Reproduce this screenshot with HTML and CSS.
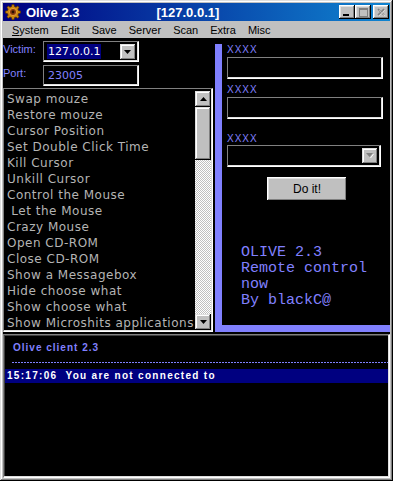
FILE: index.html
```html
<!DOCTYPE html>
<html lang="en">
<head>
  <meta charset="UTF-8">
  <title>Olive 2.3</title>
  <link rel="stylesheet" href="styles.css">
</head>
<body>

  <div class="window">
    <div class="titlebar">
      <svg class="app-icon" width="16" height="16" viewBox="0 0 16 16">
        <g fill="#d08a10" stroke="#5a3400" stroke-width="0.8">
          <path d="M7 0.5h2l0.4 2 1.6 0.7 1.7-1.2 1.4 1.4-1.2 1.7 0.7 1.6 2 0.4v2l-2 0.4-0.7 1.6 1.2 1.7-1.4 1.4-1.7-1.2-1.6 0.7-0.4 2h-2l-0.4-2-1.6-0.7-1.7 1.2-1.4-1.4 1.2-1.7-0.7-1.6-2-0.4v-2l2-0.4 0.7-1.6-1.2-1.7 1.4-1.4 1.7 1.2 1.6-0.7z"/>
        </g>
        <circle cx="8" cy="8" r="3.6" fill="#8a3a10" stroke="#f0b040" stroke-width="0.8"/>
        <circle cx="8" cy="8" r="1.4" fill="#2a1000"/>
      </svg>
      <span class="title">Olive 2.3</span>
      <span class="title-ip">[127.0.0.1]</span>
      <div class="title-buttons">
        <div class="tbtn"><svg width="8" height="7" viewBox="0 0 8 7"><rect x="0" y="5" width="6" height="2" fill="#000"/></svg></div>
        <div class="tbtn"><svg width="9" height="9" viewBox="0 0 9 9"><rect x="0.5" y="0.5" width="8" height="8" fill="none" stroke="#808080"/><rect x="0" y="0" width="9" height="2" fill="#808080"/></svg></div>
        <div class="tbtn close"><svg width="9" height="8" viewBox="0 0 9 8"><path d="M1 1l6 6M7 1l-6 6" stroke="#808080" stroke-width="1.6"/><path d="M2 2l6 6M8 2l-6 6" stroke="#fff" stroke-width="0.6" opacity="0.7"/></svg></div>
      </div>
    </div>

    <div class="menubar">
      <span class="menu-item"><u>S</u>ystem</span>
      <span class="menu-item">Edit</span>
      <span class="menu-item">Save</span>
      <span class="menu-item">Server</span>
      <span class="menu-item">Scan</span>
      <span class="menu-item">Extra</span>
      <span class="menu-item">Misc</span>
    </div>

    <div class="client">
      <div class="top">
        <div class="left">
          <div class="field-row">
            <label class="field-label">Victim:</label>
            <div class="combo">
              <span class="combo-value selected">127.0.0.1</span>
              <div class="drop-btn"><svg width="7" height="4" viewBox="0 0 7 4"><path d="M0 0h7l-3.5 4z" fill="#000"/></svg></div>
            </div>
          </div>
          <div class="field-row">
            <label class="field-label">Port:</label>
            <div class="textbox port">23005</div>
          </div>

          <div class="listbox">
            <ul class="list">
              <li>Swap mouze</li>
              <li>Restore mouze</li>
              <li>Cursor Position</li>
              <li>Set Double Click Time</li>
              <li>Kill Cursor</li>
              <li>Unkill Cursor</li>
              <li>Control the Mouse</li>
              <li>&nbsp;Let the Mouse</li>
              <li>Crazy Mouse</li>
              <li>Open CD-ROM</li>
              <li>Close CD-ROM</li>
              <li>Show a Messagebox</li>
              <li>Hide choose what</li>
              <li>Show choose what</li>
              <li>Show Microshits applications</li>
            </ul>
            <div class="scrollbar">
              <div class="sbtn"><svg width="7" height="4" viewBox="0 0 7 4"><path d="M3.5 0l3.5 4h-7z" fill="#000"/></svg></div>
              <div class="thumb"></div>
              <div class="track"></div>
              <div class="sbtn"><svg width="7" height="4" viewBox="0 0 7 4"><path d="M0 0h7l-3.5 4z" fill="#000"/></svg></div>
            </div>
          </div>
        </div>

        <div class="right">
          <div class="panel">
            <div class="xlabel">XXXX</div>
            <div class="textbox wide"></div>
            <div class="xlabel">XXXX</div>
            <div class="textbox wide"></div>
            <div class="xlabel third">XXXX</div>
            <div class="combo wide-combo">
              <span class="combo-value"></span>
              <div class="drop-btn"><svg width="8" height="6" viewBox="0 0 8 6"><path d="M0 0h7l-3.5 4z" fill="#808080"/><path d="M4.5 5l3-4" stroke="#fff" stroke-width="1"/></svg></div>
            </div>
            <div class="do-row"><button class="do-btn">Do it!</button></div>
            <div class="about">OLIVE 2.3<br>Remote control<br>now<br>By blackC@</div>
          </div>
        </div>
      </div>

      <div class="log">
        <div class="log-title">Olive client 2.3</div>
        <div class="dashes"></div>
        <div class="log-line">15:17:06&nbsp; You are not connected to</div>
      </div>
    </div>
  </div>

</body>
</html>
```

FILE: styles.css
```css
body {
  margin: 0;
  background-color: #c0c0c0;
  font-family: "Liberation Sans", Arial, sans-serif;
}
.window {
  width: 393px;
  height: 481px;
  box-sizing: border-box;
  padding: 3px 3px 3px 3px;
  background-color: #c0c0c0;
  box-shadow: inset -1px -1px #000, inset 1px 1px #dfdfdf, inset -2px -2px #808080, inset 2px 2px #fff;
  display: flex;
  flex-direction: column;
}

/* title bar */
.titlebar {
  height: 18px;
  display: flex;
  align-items: center;
  background: linear-gradient(to right, #000080, #1084d0);
  color: white;
  font-weight: bold;
  font-size: 12px;
}
.app-icon {
  margin-left: 2px;
}
.title {
  margin-left: 5px;
  font-size: 13px;
}
.title-ip {
  margin-left: 77px;
  font-size: 13px;
}
.title-buttons {
  margin-left: auto;
  margin-right: 1px;
  display: flex;
}
.tbtn {
  width: 16px;
  height: 14px;
  box-sizing: border-box;
  background-color: #c0c0c0;
  box-shadow: inset -1px -1px #000, inset 1px 1px #fff, inset -2px -2px #808080, inset 2px 2px #dfdfdf;
  display: flex;
  align-items: center;
  justify-content: center;
}
.tbtn.close {
  margin-left: 2px;
}

/* menu */
.menubar {
  height: 17px;
  display: flex;
  align-items: center;
  padding-left: 3px;
  font-size: 11px;
  color: #000;
}
.menu-item {
  padding: 0 6px;
}

/* client */
.client {
  flex: 1;
  background-color: #000;
  display: flex;
  flex-direction: column;
}
.top {
  height: 295px;
  display: flex;
}
.left {
  width: 210px;
  display: flex;
  flex-direction: column;
}
.field-row {
  display: flex;
  margin-top: 3px;
}
.field-label {
  width: 40px;
  color: #8080ff;
  font-size: 11px;
  padding-top: 2px;
}
.textbox, .combo {
  height: 21px;
  box-sizing: border-box;
  border: 1px solid;
  border-color: #808080 #fff #fff #808080;
  box-shadow: inset -1px -1px #dfdfdf;
  background-color: #000;
}
.combo {
  width: 96px;
  display: flex;
  align-items: center;
  padding: 0 2px 0 3px;
}
.combo-value {
  flex: 1;
  font-family: "DejaVu Sans", sans-serif;
  font-size: 11px;
  color: white;
}
.selected {
  flex: 0 0 auto;
  background-color: #000080;
  padding: 1px 1px;
  margin-right: auto;
}
.drop-btn {
  width: 16px;
  height: 16px;
  margin-left: auto;
  box-sizing: border-box;
  background-color: #c0c0c0;
  box-shadow: inset -1px -1px #000, inset 1px 1px #dfdfdf, inset -2px -2px #808080, inset 2px 2px #fff;
  display: flex;
  align-items: center;
  justify-content: center;
}
.textbox.port {
  width: 96px;
  color: #8080ff;
  font-family: "DejaVu Sans", sans-serif;
  font-size: 11px;
  padding: 3px 0 0 4px;
}

/* list */
.listbox {
  margin-top: 2px;
  height: 244px;
  box-sizing: border-box;
  border: 1px solid;
  border-color: #808080 #fff #fff #808080;
  box-shadow: inset -1px -1px #dfdfdf;
  display: flex;
  padding: 2px 1px 1px 3px;
  overflow: hidden;
}
.list {
  list-style: none;
  margin: 0;
  padding: 0;
  flex: 1;
  overflow: hidden;
  white-space: nowrap;
  font-family: "DejaVu Sans", sans-serif;
  font-size: 12px;
  line-height: 16px;
  letter-spacing: 0.5px;
  color: #b4b4b4;
}
.scrollbar {
  width: 16px;
  display: flex;
  flex-direction: column;
}
.sbtn {
  height: 16px;
  box-sizing: border-box;
  background-color: #c0c0c0;
  box-shadow: inset -1px -1px #000, inset 1px 1px #dfdfdf, inset -2px -2px #808080, inset 2px 2px #fff;
  display: flex;
  align-items: center;
  justify-content: center;
}
.thumb {
  height: 53px;
  background-color: #c0c0c0;
  box-shadow: inset -1px -1px #000, inset 1px 1px #dfdfdf, inset -2px -2px #808080, inset 2px 2px #fff;
}
.track {
  flex: 1;
  background: repeating-conic-gradient(#c0c0c0 0 25%, #fff 0 50%) 0 0 / 2px 2px;
}

/* right panel */
.right {
  flex: 1;
  padding: 6px 0 1px 2px;
  display: flex;
}
.panel {
  flex: 1;
  border-left: 7px solid #8080ff;
  border-bottom: 7px solid #8080ff;
  padding-left: 5px;
  display: flex;
  flex-direction: column;
}
.xlabel {
  color: #8080ff;
  font-size: 10px;
  letter-spacing: 1px;
  height: 12px;
}
.textbox.wide {
  width: 156px;
  height: 22px;
  margin-top: 1px;
  margin-bottom: 5px;
}
.xlabel.third {
  margin-top: 9px;
}
.wide-combo {
  width: 154px;
  height: 22px;
}
.do-row {
  width: 160px;
  display: flex;
  justify-content: center;
  margin-top: 10px;
}
.do-btn {
  width: 80px;
  height: 24px;
  border: none;
  background-color: #c0c0c0;
  box-shadow: inset -1px -1px #000, inset 1px 1px #fff, inset -2px -2px #808080, inset 2px 2px #dfdfdf;
  font-family: "Liberation Sans", Arial, sans-serif;
  font-size: 12px;
  color: #000;
}
.about {
  margin-top: 44px;
  margin-left: 14px;
  font-family: "Liberation Mono", "Courier New", monospace;
  font-size: 15px;
  line-height: 16px;
  color: #8080ff;
}

/* log */
.log {
  flex: 1;
  box-sizing: border-box;
  border: 1px solid;
  border-color: #808080 #fff #fff #808080;
  box-shadow: inset -1px -1px #dfdfdf, inset 1px 1px #404040;
  padding: 2px 1px 1px 1px;
  margin-top: 1px;
}
.log-title {
  margin: 5px 0 0 8px;
  font-size: 10px;
  font-weight: bold;
  letter-spacing: 1px;
  color: #8080ff;
}
.dashes {
  height: 1px;
  margin: 9px 0 0 7px;
  background: repeating-linear-gradient(to right, #8080ff 0 2px, transparent 2px 3px);
}
.log-line {
  margin-top: 6px;
  height: 14px;
  background-color: #000080;
  color: white;
  font-size: 10px;
  font-weight: bold;
  letter-spacing: 1.3px;
  line-height: 14px;
  padding-left: 2px;
}
```
